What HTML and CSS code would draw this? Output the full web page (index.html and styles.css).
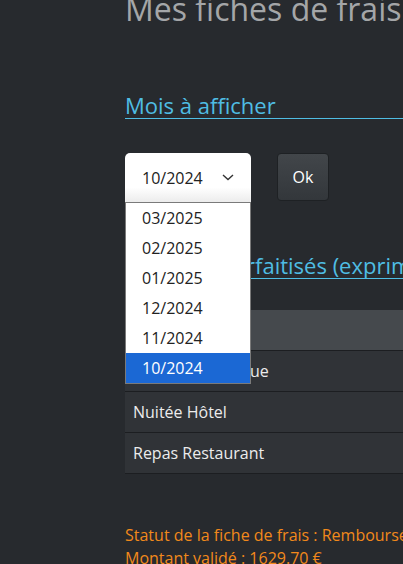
FILE: index.html
```html
<!DOCTYPE html>
<html lang="fr">
<head>
<meta charset="utf-8">
<title>Mes fiches de frais</title>
<link rel="stylesheet" href="styles.css">
</head>
<body>
<div class="page">
  <h1 class="title">Mes fiches de frais</h1>
  <h2 class="section">Mois à afficher</h2>
  <form class="month-form">
    <div class="select-wrap">
      <div class="select">
        <span class="select-value">10/2024</span>
        <svg class="chevron" width="12" height="7" viewBox="0 0 12 7"><path d="M1 1 L6 5.5 L11 1" fill="none" stroke="#333" stroke-width="1.4"/></svg>
      </div>
      <ul class="options">
        <li>03/2025</li>
        <li>02/2025</li>
        <li>01/2025</li>
        <li>12/2024</li>
        <li>11/2024</li>
        <li class="selected">10/2024</li>
      </ul>
    </div>
    <button type="button" class="ok">Ok</button>
  </form>
  <h2 class="section second">Éléments forfaitisés (exprimés en quantité)</h2>
  <table class="frais">
    <thead>
      <tr><th>Libellé</th><th>Quantité</th></tr>
    </thead>
    <tbody>
      <tr><td>Frais Kilométrique</td><td></td></tr>
      <tr><td>Nuitée Hôtel</td><td></td></tr>
      <tr><td>Repas Restaurant</td><td></td></tr>
    </tbody>
  </table>
  <p class="statut">Statut de la fiche de frais : Remboursée<br>Montant validé : 1629.70 €</p>
</div>
</body>
</html>
```

FILE: styles.css
```css
html, body {
  margin: 0;
  padding: 0;
  overflow: hidden;
  background: #272a2e;
}
body {
  font-family: "Open Sans", "Noto Sans", sans-serif;
  color: #e6e6e6;
  width: 403px;
  height: 564px;
}
.page {
  padding-left: 125px;
  width: 700px;
}
.title {
  margin: -10px 0 0;
  font-size: 32px;
  line-height: 38px;
  font-weight: 400;
  color: #a4a6a8;
  white-space: nowrap;
}
.section {
  margin: 66px 0 0;
  font-size: 22px;
  line-height: 23px;
  padding-bottom: 1px;
  font-weight: 400;
  color: #4fbde3;
  border-bottom: 1px solid #4fbde3;
  white-space: nowrap;
}
.section.second {
  margin-top: 52px;
}
.month-form {
  margin: 34px 0 0;
  display: flex;
  align-items: flex-start;
}
.select-wrap {
  position: relative;
  width: 126px;
}
.select {
  box-sizing: border-box;
  height: 49px;
  display: flex;
  align-items: center;
  justify-content: space-between;
  padding: 1px 17px 0 17px;
  background: linear-gradient(#ffffff 0, #ffffff 70%, #ececec 100%);
  border-radius: 5px 5px 0 0;
  color: #222;
  font-size: 16px;
  line-height: 24px;
}
.chevron {
  display: block;
  margin-top: -2px;
}
.options {
  position: absolute;
  top: 100%;
  left: 0;
  z-index: 5;
  box-sizing: border-box;
  width: 126px;
  margin: 0;
  padding: 0;
  list-style: none;
  background: #fff;
  border: 1px solid #7a7a7a;
}
.options li {
  height: 30px;
  line-height: 30px;
  padding-left: 16px;
  font-size: 16px;
  color: #222;
}
.options li.selected {
  background: #1b68d4;
  color: #fff;
}
.ok {
  box-sizing: border-box;
  margin: 0 0 0 26px;
  width: 52px;
  height: 48px;
  background: linear-gradient(#42464a, #33373b);
  border: 1px solid #1e2124;
  border-radius: 4px;
  color: #fff;
  font-family: "Open Sans", "Noto Sans", sans-serif;
  font-size: 16px;
  padding: 0;
}
.frais {
  margin-top: 31px;
  width: 600px;
  border-collapse: collapse;
}
.frais th, .frais td {
  height: 40px;
  padding: 0 8px;
  text-align: left;
  font-size: 16px;
  line-height: 24px;
  border-bottom: 1px solid #1c1e21;
  vertical-align: middle;
}
.frais th {
  background: #45494d;
  font-weight: 600;
  color: #fff;
}
.frais td {
  background: #303337;
  color: #ececec;
}
.statut {
  margin: 50px 0 0;
  font-size: 16px;
  line-height: 23px;
  color: #f2891b;
  white-space: nowrap;
}
```
